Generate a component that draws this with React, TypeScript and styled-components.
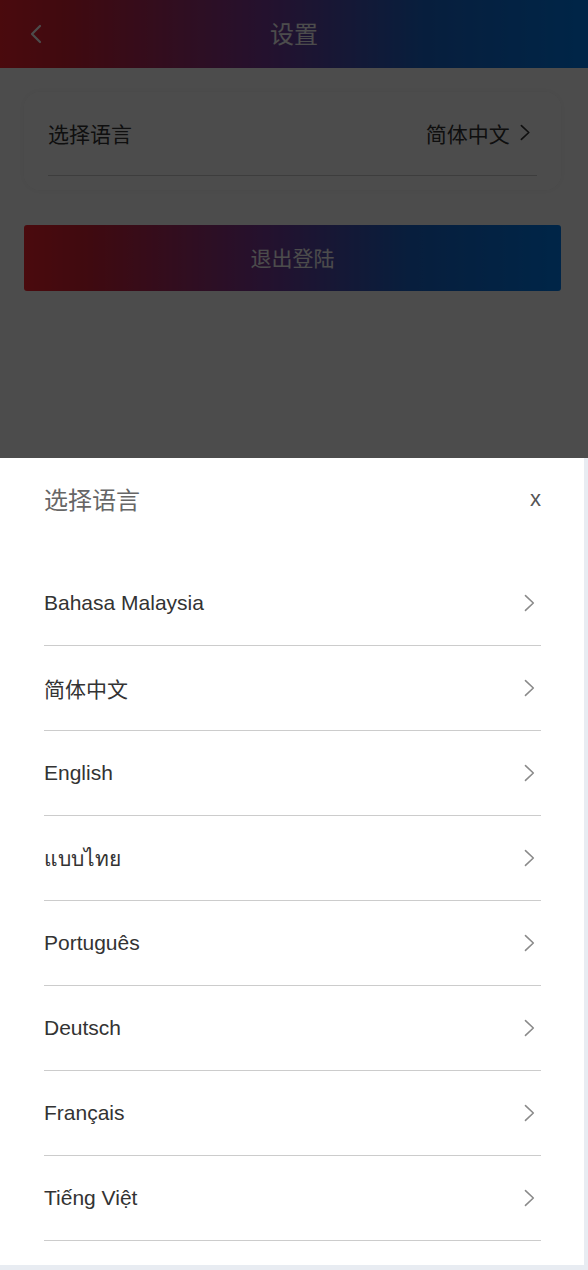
import React from 'react'
import styled, { createGlobalStyle } from 'styled-components'

const languages = [
  'Bahasa Malaysia',
  '简体中文',
  'English',
  'แบบไทย',
  'Português',
  'Deutsch',
  'Français',
  'Tiếng Việt',
]

const GlobalStyle = createGlobalStyle`
  html, body {
    margin: 0;
    padding: 0;
    background: #ffffff;
    font-family: "Liberation Sans", Arial, "Noto Sans CJK SC", sans-serif;
  }
  * {
    box-sizing: border-box;
  }
`

const brandGradient = 'linear-gradient(90deg, #f8232e 0%, #d42236 12%, #7a3a9a 45%, #1a66cc 72%, #007ef0 100%)'

const Chevron = ({ color = '#8a8a8a', size = 18, stroke = 1.6 }: { color?: string; size?: number; stroke?: number }) => (
  <svg width={size * 0.6} height={size} viewBox="0 0 11 18" fill="none">
    <path d="M1.5 1.5 L9.5 9 L1.5 16.5" stroke={color} strokeWidth={stroke} strokeLinecap="round" strokeLinejoin="round" />
  </svg>
)

const App = () => {
  return (
    <>
      <GlobalStyle />
      <Page>
        <Header>
          <BackButton>
            <svg width="12" height="20" viewBox="0 0 12 20" fill="none">
              <path d="M10 2 L2 10 L10 18" stroke="#ffffff" strokeWidth="2.2" strokeLinecap="round" strokeLinejoin="round" />
            </svg>
          </BackButton>
          <Title>设置</Title>
          <Spacer />
        </Header>

        <Content>
          <Card>
            <SettingRow>
              <span>选择语言</span>
              <SettingValue>
                简体中文
                <Chevron color="#333" size={17} stroke={1.8} />
              </SettingValue>
            </SettingRow>
          </Card>
          <LogoutButton>退出登陆</LogoutButton>
        </Content>

        <Overlay>
          <Sheet>
            <SheetHeader>
              <SheetTitle>选择语言</SheetTitle>
              <CloseButton>x</CloseButton>
            </SheetHeader>
            <LangList>
              {languages.map((lang) => (
                <LangRow key={lang}>
                  <span>{lang}</span>
                  <Chevron />
                </LangRow>
              ))}
            </LangList>
          </Sheet>
        </Overlay>
      </Page>
    </>
  )
}

const Page = styled.div`
  position: relative;
  width: 100%;
  height: 1270px;
  overflow: hidden;
  background: #ffffff;
`

const Header = styled.header`
  height: 68px;
  display: flex;
  align-items: center;
  background: ${brandGradient};
  color: #ffffff;
`

const BackButton = styled.div`
  width: 72px;
  padding-left: 30px;
  display: flex;
  align-items: center;
`

const Title = styled.h1`
  flex: 1;
  margin: 0 0 4px;
  text-align: center;
  font-size: 24px;
  font-weight: normal;
  font-family: "Noto Sans CJK SC", sans-serif;
`

const Spacer = styled.div`
  width: 72px;
`

const Content = styled.main`
  padding: 24px 27px 0 24px;
`

const Card = styled.section`
  background: #ffffff;
  border-radius: 16px;
  box-shadow: 0 0 10px rgba(0, 0, 0, 0.06);
  padding: 0 24px 14px;
`

const SettingRow = styled.div`
  height: 84px;
  display: flex;
  align-items: center;
  justify-content: space-between;
  border-bottom: 1px solid #cccccc;
  font-size: 21px;
  color: #333333;
  font-family: "Noto Sans CJK SC", sans-serif;
  padding: 0 7px 2px 0;
`

const SettingValue = styled.div`
  display: flex;
  align-items: center;
  gap: 10px;
`

const LogoutButton = styled.div`
  margin-top: 35px;
  height: 66px;
  border-radius: 3px;
  background: ${brandGradient};
  color: #ffffff;
  display: flex;
  align-items: center;
  justify-content: center;
  font-size: 21px;
  font-family: "Noto Sans CJK SC", sans-serif;
  padding-bottom: 2px;
`

const Overlay = styled.div`
  position: absolute;
  inset: 0;
  background: rgba(0, 0, 0, 0.7);
  display: flex;
  flex-direction: column;
  justify-content: flex-end;
`

const Sheet = styled.div`
  height: 812px;
  background: #ffffff;
  border-right: 4px solid #e8ecf2;
  border-bottom: 5px solid #e8ecf2;
  padding: 0 43px 24px 44px;
`

const SheetHeader = styled.div`
  height: 103px;
  display: flex;
  justify-content: space-between;
  align-items: flex-start;
  padding-top: 23px;
`

const SheetTitle = styled.h2`
  margin: 0;
  font-size: 24px;
  font-weight: normal;
  color: #666666;
  font-family: "Noto Sans CJK SC", sans-serif;
`

const CloseButton = styled.span`
  font-size: 22px;
  color: #555555;
  margin-top: 6px;
  line-height: 24px;
`

const LangList = styled.ul`
  list-style: none;
  margin: 0;
  padding: 0;
`

const LangRow = styled.li`
  height: 85px;
  display: flex;
  align-items: center;
  justify-content: space-between;
  border-bottom: 1px solid #cccccc;
  font-size: 21px;
  color: #333333;
  padding-right: 6px;
`

export default App
